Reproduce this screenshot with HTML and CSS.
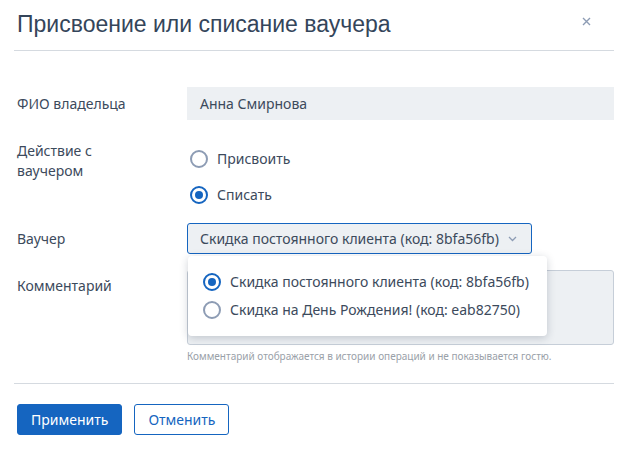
FILE: index.html
```html
<!DOCTYPE html>
<html>
<head>
  <title>Присвоение или списание ваучера</title>
  <link rel="stylesheet" href="styles.css">
</head>
<body>
<div class="modal">
  <div class="modal-header">
    <h1>Присвоение или списание ваучера</h1>
    <span class="close">
      <svg width="9" height="9" viewBox="0 0 9 9"><path d="M1 1L8 8M8 1L1 8" stroke="#8d9cb4" stroke-width="1.4"/></svg>
    </span>
  </div>

  <div class="form">
    <div class="row row-center">
      <div class="label">ФИО владельца</div>
      <div class="field">
        <div class="input">Анна Смирнова</div>
      </div>
    </div>

    <div class="row">
      <div class="label label-top">Действие с<br>ваучером</div>
      <div class="field radios">
        <label class="radio"><span class="dot"></span>Присвоить</label>
        <label class="radio checked"><span class="dot"></span>Списать</label>
      </div>
    </div>

    <div class="row row-center">
      <div class="label">Ваучер</div>
      <div class="field">
        <div class="select-wrap">
          <div class="select">
            Скидка постоянного клиента (код: 8bfa56fb)
            <svg class="chevron" width="9" height="6" viewBox="0 0 9 6"><path d="M1 1L4.5 4.5L8 1" fill="none" stroke="#8d9cb4" stroke-width="1.3"/></svg>
          </div>
          <div class="dropdown">
            <label class="radio option checked"><span class="dot"></span>Скидка постоянного клиента (код: 8bfa56fb)</label>
            <label class="radio option"><span class="dot"></span>Скидка на День Рождения! (код: eab82750)</label>
          </div>
        </div>
      </div>
    </div>

    <div class="row">
      <div class="label label-comment">Комментарий</div>
      <div class="field">
        <div class="textarea"></div>
        <div class="hint">Комментарий отображается в истории операций и не показывается гостю.</div>
      </div>
    </div>
  </div>

  <div class="footer">
    <button class="btn btn-primary">Применить</button>
    <button class="btn btn-outline">Отменить</button>
  </div>
</div>
</body>
</html>
```

FILE: styles.css
```css
body {
  margin: 0;
  background-color: #ffffff;
  font-family: "Noto Sans", sans-serif;
  font-size: 14px;
  color: #3c4a5c;
}
.modal {
  width: 632px;
  height: 453px;
  padding: 0 18px 0 17px;
  box-sizing: border-box;
}
.modal-header {
  position: relative;
  height: 50px;
  border-bottom: 1px solid #d5dae0;
  margin-left: -3px;
  padding-left: 3px;
}
h1 {
  margin: 0;
  padding-top: 11px;
  font-family: "Liberation Sans", Arial, sans-serif;
  font-weight: normal;
  font-size: 23px;
  color: #34455a;
}
.close {
  position: absolute;
  right: 23px;
  top: 11px;
}
.form {
  padding-top: 36px;
}
.row {
  display: flex;
  margin-bottom: 16px;
}
.row-center {
  align-items: center;
}
.label {
  width: 170px;
  flex-shrink: 0;
  line-height: 20px;
  color: #3c4a5c;
}
.label-top {
  padding-top: 5px;
}
.label-comment {
  padding-top: 6px;
}
.field {
  flex: 1;
}
.input {
  height: 33px;
  line-height: 33px;
  padding: 0 13px;
  background-color: #edf0f3;
}
.radios {
  display: flex;
  flex-direction: column;
  gap: 16px;
  padding-top: 13px;
  margin-bottom: 2px;
}
.radio {
  display: flex;
  align-items: center;
  line-height: 20px;
}
.radio .dot {
  width: 18px;
  height: 18px;
  border: 2px solid #8d9cb4;
  border-radius: 50%;
  box-sizing: border-box;
  margin: 0 9px 0 3px;
  position: relative;
  background-color: #fff;
}
.radio.checked .dot {
  border-color: #1565c0;
}
.radio.checked .dot::after {
  content: "";
  position: absolute;
  left: 3px;
  top: 3px;
  width: 8px;
  height: 8px;
  border-radius: 50%;
  background-color: #1565c0;
}
.select-wrap {
  position: relative;
}
.select {
  display: inline-flex;
  align-items: center;
  height: 31px;
  padding: 0 14px 0 12px;
  border: 1px solid #1565c0;
  border-radius: 3px;
  background-color: #edf0f3;
  box-sizing: border-box;
  white-space: nowrap;
}
.chevron {
  margin-left: 9px;
}
.dropdown {
  position: absolute;
  left: 1px;
  top: 33px;
  width: 359px;
  padding: 12px 0 12px;
  box-sizing: border-box;
  background-color: #fff;
  border-radius: 4px;
  box-shadow: 0 2px 8px rgba(30, 45, 70, 0.22);
  z-index: 2;
}
.option {
  padding-left: 13px;
  height: 28px;
  white-space: nowrap;
}
.option .dot {
  margin: 0 9px 0 2px;
}
.textarea {
  height: 75px;
  border: 1px solid #c6ced8;
  border-radius: 3px;
  background-color: #edf0f3;
  box-sizing: border-box;
}
.hint {
  margin-top: 4px;
  font-size: 10px;
  color: #9aa1a9;
}
.footer {
  margin-top: 20px;
  margin-left: -3px;
  padding: 20px 0 0 3px;
  border-top: 1px solid #d5dae0;
  display: flex;
  gap: 12px;
}
.btn {
  font-family: "Noto Sans", sans-serif;
  font-size: 14px;
  height: 31px;
  padding: 0 13px;
  border-radius: 3px;
  cursor: pointer;
}
.btn-primary {
  background-color: #1565c0;
  border: 1px solid #1565c0;
  color: #fff;
}
.btn-outline {
  background-color: #fff;
  border: 1px solid #1565c0;
  color: #1565c0;
}
```
